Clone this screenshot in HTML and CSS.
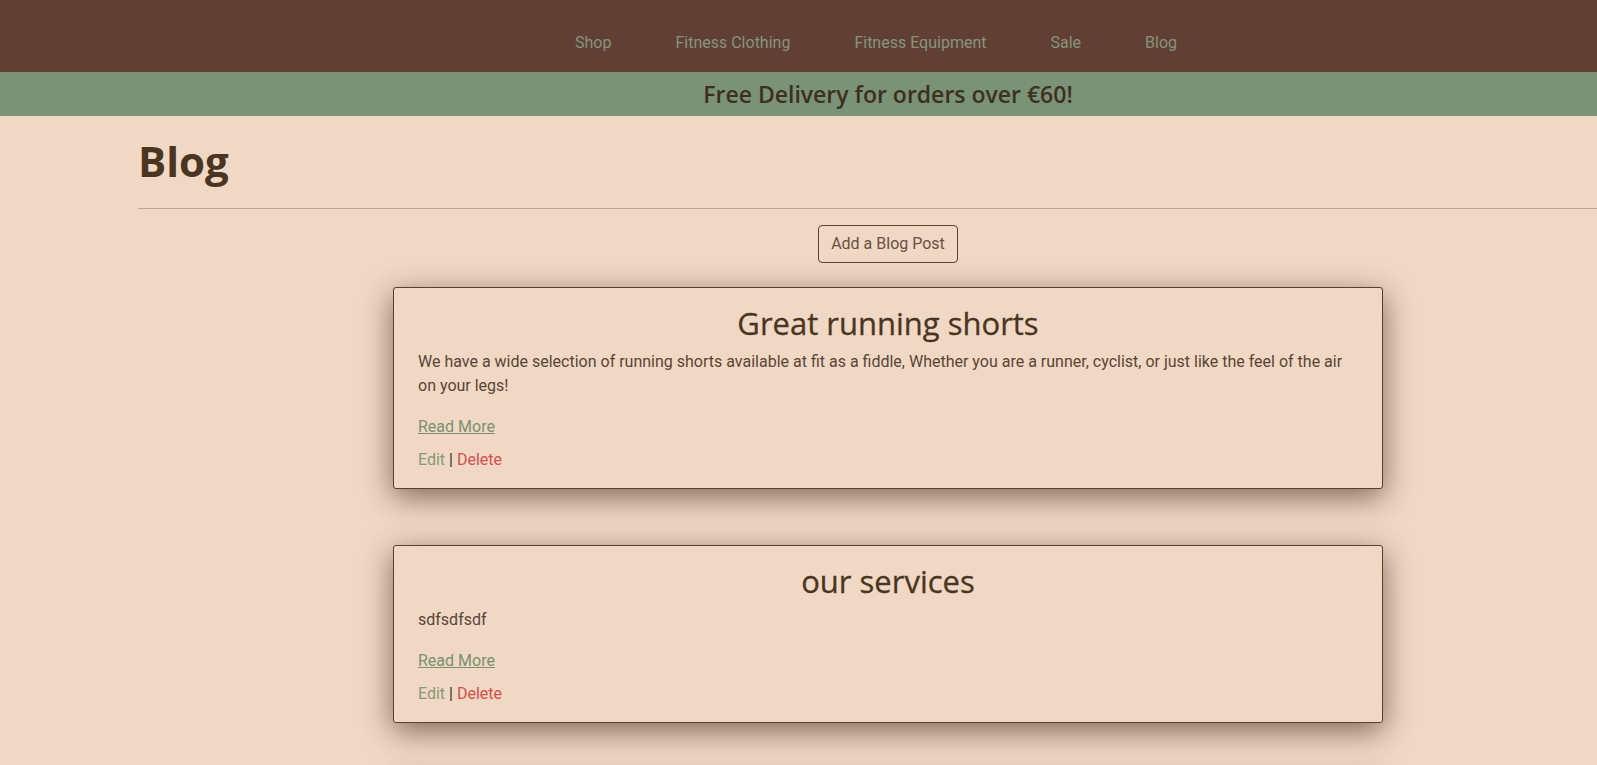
FILE: index.html
```html
<!DOCTYPE html>
<html lang="en">
<head>
<meta charset="utf-8">
<title>Blog</title>
<link rel="stylesheet" href="styles.css">
</head>
<body>
<header class="site-header">
  <nav class="main-nav">
    <ul class="nav-list">
      <li><a href="#">Shop</a></li>
      <li><a href="#">Fitness Clothing</a></li>
      <li><a href="#">Fitness Equipment</a></li>
      <li><a href="#">Sale</a></li>
      <li><a href="#">Blog</a></li>
    </ul>
  </nav>
  <div class="delivery-banner">
    <div class="container">
      <p class="delivery-text">Free Delivery for orders over €60!</p>
    </div>
  </div>
</header>
<main class="container">
  <h1 class="page-title">Blog</h1>
  <hr class="divider">
  <div class="add-row">
    <a class="btn-outline" href="#">Add a Blog Post</a>
  </div>
  <div class="posts">
    <article class="post-card">
      <h2 class="post-title">Great running shorts</h2>
      <p class="post-body">We have a wide selection of running shorts available at fit as a fiddle, Whether you are a runner, cyclist, or just like the feel of the air on your legs!</p>
      <a class="read-more" href="#">Read More</a>
      <div class="post-actions"><a class="edit" href="#">Edit</a> | <a class="delete" href="#">Delete</a></div>
    </article>
    <article class="post-card">
      <h2 class="post-title">our services</h2>
      <p class="post-body">sdfsdfsdf</p>
      <a class="read-more" href="#">Read More</a>
      <div class="post-actions"><a class="edit" href="#">Edit</a> | <a class="delete" href="#">Delete</a></div>
    </article>
    <article class="post-card">
      <h2 class="post-title">More posts</h2>
      <p class="post-body">Coming soon</p>
    </article>
  </div>
</main>
</body>
</html>
```
FILE: styles.css
```css
html, body {
  margin: 0;
  padding: 0;
  overflow-x: hidden;
}
body {
  background: #f0d8c5;
  font-family: Roboto, "Liberation Sans", sans-serif;
  font-size: 16px;
  line-height: 1.5;
  color: #5a4535;
}
a { text-decoration: none; }

.site-header { width: 100%; }
.main-nav {
  background: #623f35;
  height: 72px;
  box-sizing: border-box;
  padding-top: 31px;
}
.nav-list {
  list-style: none;
  margin: 0 0 0 543px;
  padding: 0;
  display: flex;
}
.nav-list a {
  display: block;
  padding: 0 32px;
  color: #85957b;
  font-size: 16px;
  line-height: 24px;
}

.delivery-banner {
  background: #7a9276;
  height: 44px;
}
.container {
  width: 1500px;
  margin-left: 138px;
}
.delivery-text {
  margin: 0;
  text-align: center;
  font-family: "Open Sans", "Noto Sans", sans-serif;
  font-weight: 600;
  font-size: 23px;
  line-height: 44px;
  color: #3d3020;
}

.page-title {
  margin: 0;
  padding-top: 16px;
  padding-bottom: 2px;
  font-family: "Open Sans", "Noto Sans", sans-serif;
  font-weight: 700;
  font-size: 42px;
  line-height: 58px;
  color: #4a3520;
}
.divider {
  border: 0;
  border-top: 1px solid #c0a594;
  margin: 16px 0 16px 0;
}
.add-row {
  display: flex;
  justify-content: center;
}
.btn-outline {
  display: inline-block;
  padding: 6px 12px;
  border: 1px solid #5a4030;
  border-radius: 4px;
  color: #6a5040;
  font-size: 16px;
  line-height: 24px;
}

.posts {
  margin-top: 24px;
  display: flex;
  flex-direction: column;
  align-items: center;
  gap: 56px;
}
.post-card {
  width: 990px;
  box-sizing: border-box;
  border: 1px solid #5a4030;
  border-radius: 3px;
  padding: 16px 24px 16px 24px;
  background: #f0d8c5;
  box-shadow: 0 8px 30px rgba(70, 40, 25, 0.65);
}
.post-title {
  margin: 0 0 8px 0;
  text-align: center;
  font-family: "Open Sans", "Noto Sans", sans-serif;
  font-weight: 500;
  font-size: 31px;
  line-height: 38px;
  color: #4a3520;
  -webkit-text-stroke: 0.3px #4a3520;
}
.post-body {
  margin: 0 0 17px 0;
  color: #5a4535;
}
.read-more {
  display: inline-block;
  margin-bottom: 9px;
  color: #7a9070;
  text-decoration: underline;
}
.post-actions { color: #3d3020; }
.edit { color: #889878; }
.delete { color: #d0504c; }
```
